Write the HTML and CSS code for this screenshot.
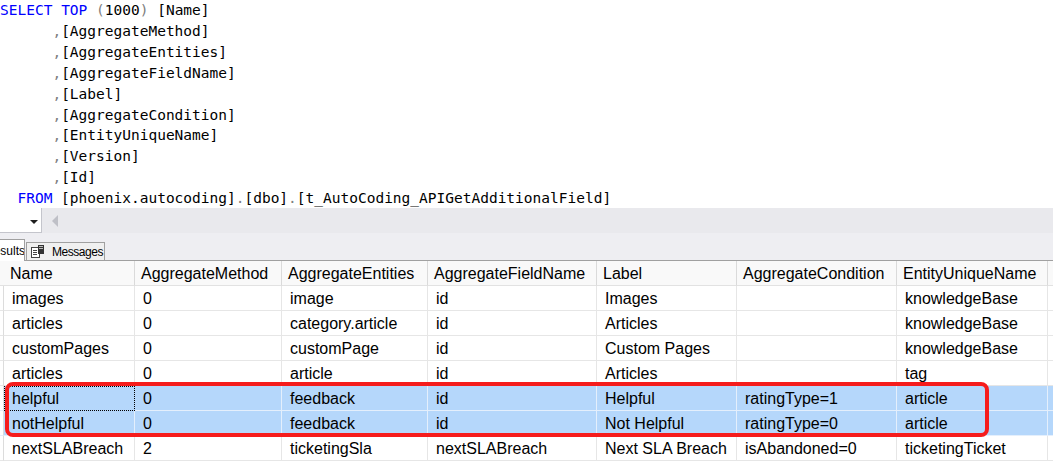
FILE: index.html
```html
<!DOCTYPE html>
<html>
<head>
<meta charset="utf-8">
<link rel="stylesheet" href="styles.css">
</head>
<body>
<div class="page">
  <div class="editor">
<pre class="code"><span class="kw">SELECT</span> <span class="kw">TOP</span> <span class="gr">(</span>1000<span class="gr">)</span> [Name]
      <span class="gr">,</span>[AggregateMethod]
      <span class="gr">,</span>[AggregateEntities]
      <span class="gr">,</span>[AggregateFieldName]
      <span class="gr">,</span>[Label]
      <span class="gr">,</span>[AggregateCondition]
      <span class="gr">,</span>[EntityUniqueName]
      <span class="gr">,</span>[Version]
      <span class="gr">,</span>[Id]
  <span class="kw">FROM</span> [phoenix.autocoding]<span class="gr">.</span>[dbo]<span class="gr">.</span>[t_AutoCoding_APIGetAdditionalField]</pre>
  </div>
  <div class="toolbar">
    <div class="combo"><span class="caret"></span></div>
    <span class="scroll-left"></span>
  </div>
  <div class="tabstrip">
    <div class="tab active"><span class="tab-label">Results</span></div>
    <div class="tab">
      <svg class="tab-icon" width="14" height="13" viewBox="0 0 14 13">
        <rect x="0.5" y="2.5" width="8" height="10" fill="#fff" stroke="#444"/>
        <line x1="2" y1="5.5" x2="6" y2="5.5" stroke="#444"/>
        <line x1="2" y1="7.5" x2="6" y2="7.5" stroke="#444"/>
        <line x1="2" y1="9.5" x2="6" y2="9.5" stroke="#444"/>
        <rect x="7" y="0" width="6" height="9" fill="#333"/>
        <rect x="8" y="1" width="4" height="1" fill="#bbb"/>
        <rect x="8" y="3" width="4" height="1" fill="#bbb"/>
      </svg>
      <span class="tab-text">Messages</span>
    </div>
  </div>
  <div class="grid">
    <div class="row head">
      <div class="cell sel"></div>
      <div class="cell">Name</div>
      <div class="cell">AggregateMethod</div>
      <div class="cell">AggregateEntities</div>
      <div class="cell">AggregateFieldName</div>
      <div class="cell">Label</div>
      <div class="cell">AggregateCondition</div>
      <div class="cell">EntityUniqueName</div>
      <div class="cell"></div>
    </div>
    <div class="row">
      <div class="cell sel"></div>
      <div class="cell">images</div>
      <div class="cell">0</div>
      <div class="cell">image</div>
      <div class="cell">id</div>
      <div class="cell">Images</div>
      <div class="cell"></div>
      <div class="cell">knowledgeBase</div>
      <div class="cell"></div>
    </div>
    <div class="row">
      <div class="cell sel"></div>
      <div class="cell">articles</div>
      <div class="cell">0</div>
      <div class="cell">category.article</div>
      <div class="cell">id</div>
      <div class="cell">Articles</div>
      <div class="cell"></div>
      <div class="cell">knowledgeBase</div>
      <div class="cell"></div>
    </div>
    <div class="row">
      <div class="cell sel"></div>
      <div class="cell">customPages</div>
      <div class="cell">0</div>
      <div class="cell">customPage</div>
      <div class="cell">id</div>
      <div class="cell">Custom Pages</div>
      <div class="cell"></div>
      <div class="cell">knowledgeBase</div>
      <div class="cell"></div>
    </div>
    <div class="row">
      <div class="cell sel"></div>
      <div class="cell">articles</div>
      <div class="cell">0</div>
      <div class="cell">article</div>
      <div class="cell">id</div>
      <div class="cell">Articles</div>
      <div class="cell"></div>
      <div class="cell">tag</div>
      <div class="cell"></div>
    </div>
    <div class="row selected">
      <div class="cell sel"></div>
      <div class="cell focus">helpful</div>
      <div class="cell">0</div>
      <div class="cell">feedback</div>
      <div class="cell">id</div>
      <div class="cell">Helpful</div>
      <div class="cell">ratingType=1</div>
      <div class="cell">article</div>
      <div class="cell"></div>
    </div>
    <div class="row selected">
      <div class="cell sel"></div>
      <div class="cell">notHelpful</div>
      <div class="cell">0</div>
      <div class="cell">feedback</div>
      <div class="cell">id</div>
      <div class="cell">Not Helpful</div>
      <div class="cell">ratingType=0</div>
      <div class="cell">article</div>
      <div class="cell"></div>
    </div>
    <div class="row">
      <div class="cell sel"></div>
      <div class="cell">nextSLABreach</div>
      <div class="cell">2</div>
      <div class="cell">ticketingSla</div>
      <div class="cell">nextSLABreach</div>
      <div class="cell">Next SLA Breach</div>
      <div class="cell">isAbandoned=0</div>
      <div class="cell">ticketingTicket</div>
      <div class="cell"></div>
    </div>
    <div class="highlight"></div>
  </div>
</div>
</body>
</html>
```

FILE: styles.css
```css
html, body {
  margin: 0;
  padding: 0;
  background: #ffffff;
}
.page {
  width: 1053px;
  height: 461px;
  overflow: hidden;
  display: flex;
  flex-direction: column;
}
.editor {
  height: 208px;
  flex: none;
  background: #ffffff;
  overflow: hidden;
}
.code {
  margin: 0;
  font-family: "DejaVu Sans Mono", "Liberation Mono", monospace;
  font-size: 14.5px;
  line-height: 20.9px;
  color: #000000;
  white-space: pre;
}
.kw { color: #0000ff; }
.gr { color: #808080; }

.toolbar {
  height: 25px;
  flex: none;
  background: #e9e9ed;
  display: flex;
  align-items: center;
}
.combo {
  width: 41px;
  height: 24px;
  background: #ffffff;
  border-right: 1px solid #c4c5cc;
  border-bottom: 1px solid #c4c5cc;
  position: relative;
  align-self: flex-start;
}
.caret {
  position: absolute;
  left: 30px;
  top: 12px;
  width: 0;
  height: 0;
  border-left: 4px solid transparent;
  border-right: 4px solid transparent;
  border-top: 4px solid #1e1e1e;
}
.scroll-left {
  display: block;
  margin-left: 10px;
  width: 0;
  height: 0;
  border-top: 6px solid transparent;
  border-bottom: 6px solid transparent;
  border-right: 6px solid #bfc0c7;
}

.tabstrip {
  height: 27px;
  flex: none;
  background: #eeeef2;
  display: flex;
  align-items: flex-end;
  gap: 1px;
  border-bottom: 1px solid #a0a0a0;
  font-family: "Liberation Sans", Arial, sans-serif;
  font-size: 12px;
  color: #000;
}
.tab {
  box-sizing: border-box;
  height: 18px;
  width: 79px;
  border: 1px solid #a0a0a0;
  border-bottom: none;
  background: #f0f0f0;
  display: flex;
  align-items: center;
  gap: 7px;
  padding-left: 4px;
}
.tab-text {
  letter-spacing: -0.45px;
}
.tab.active {
  width: 25px;
  height: 22px;
  background: #ffffff;
  border-left: none;
  padding-left: 0;
  overflow: hidden;
  position: relative;
  top: 1px;
}
.tab-label {
  margin-left: -15px;
}
.tab-icon {
  flex: none;
}

.grid {
  position: relative;
  flex: 1;
  font-family: "Liberation Sans", Arial, sans-serif;
  font-size: 16px;
  color: #000000;
  background: #ffffff;
}
.row {
  display: grid;
  grid-template-columns: 4px 131px 147px 146px 169px 140px 160px 151px 5px;
  height: 25px;
}
.cell {
  box-sizing: border-box;
  border-right: 1px solid #e6e6e6;
  border-bottom: 1px solid #e6e6e6;
  padding-left: 8px;
  white-space: nowrap;
  overflow: hidden;
  line-height: 25px;
}
.cell.sel {
  padding: 0;
  border-right: 1px solid #dcdcdc;
}
.head .cell {
  background: #f9f9f9;
  padding-left: 6px;
  border-right: 1px solid #dadada;
  border-bottom: 1px solid #e2e2e2;
}
.selected .cell {
  background: #b5d7fb;
  border-right-color: #e4effc;
  border-bottom-color: #e4effc;
}
.selected .cell.sel {
  background: #ffffff;
  border-right-color: #dcdcdc;
}
.selected .cell.focus {
  border: 1px dotted #000000;
  padding-left: 7px;
  line-height: 24px;
}
.highlight {
  position: absolute;
  left: 5px;
  top: 121px;
  width: 984px;
  height: 55px;
  box-sizing: border-box;
  border: 4px solid #f61c1c;
  border-radius: 8px;
}
```
